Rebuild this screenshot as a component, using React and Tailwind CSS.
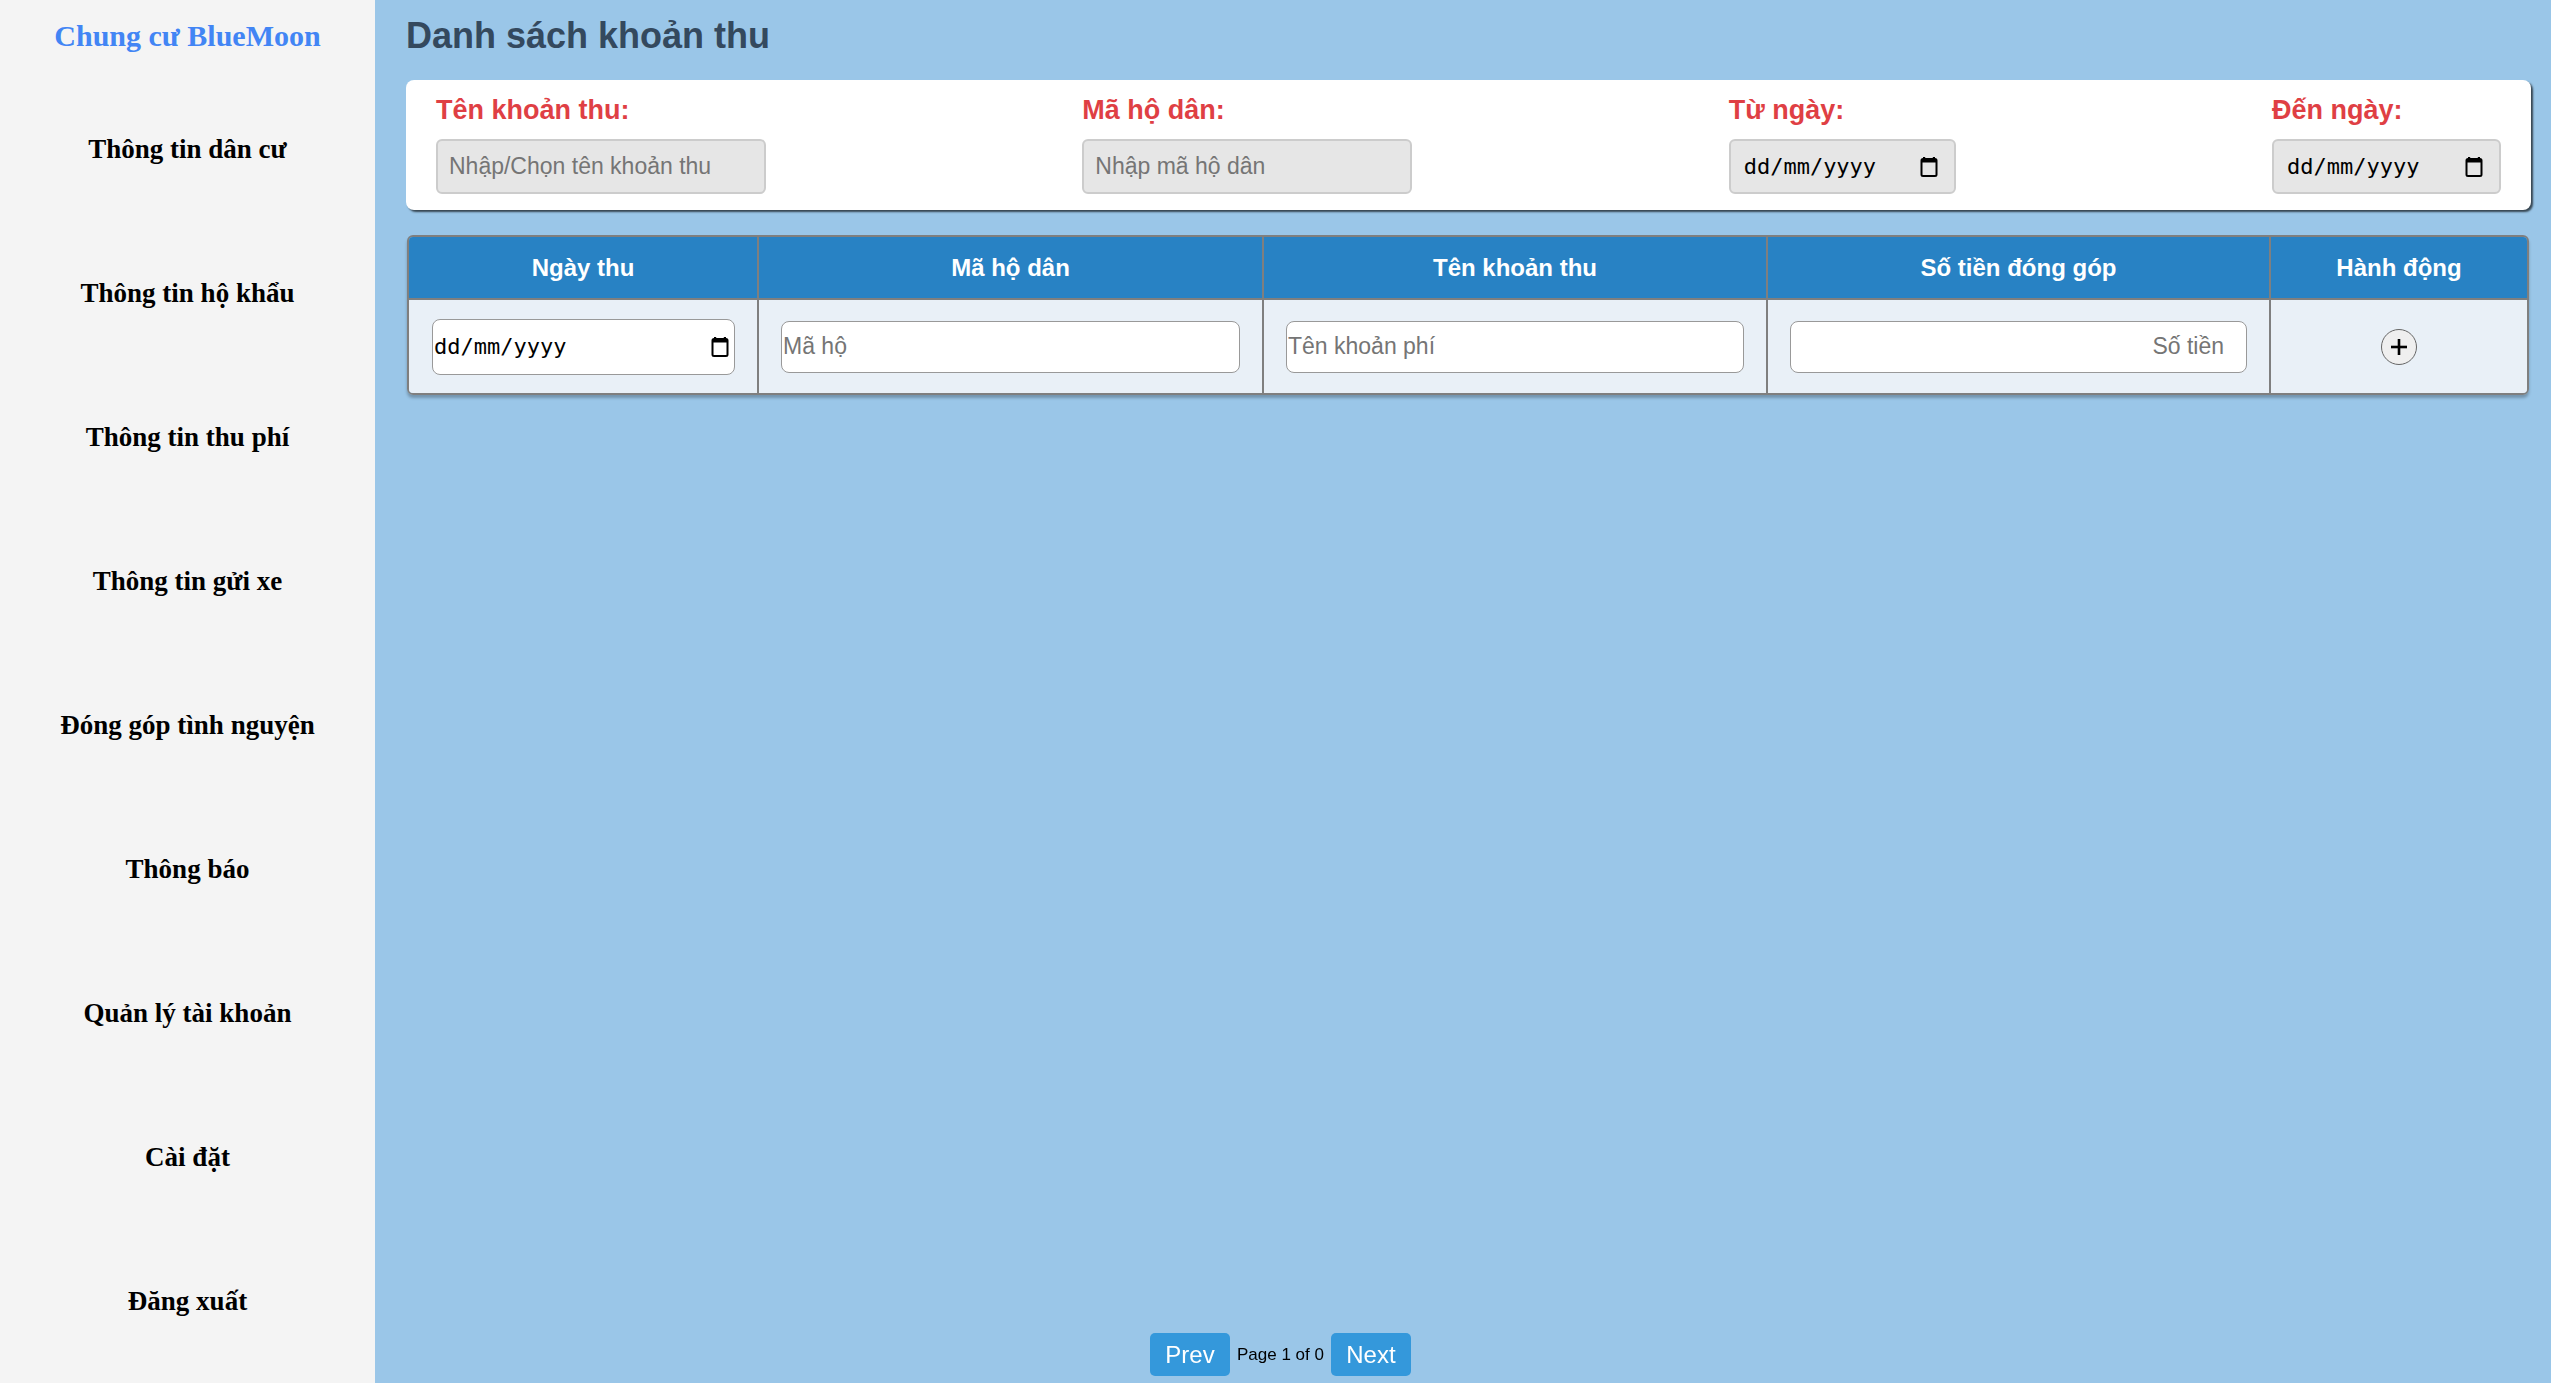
import React from 'react';

const navItems = [
  'Thông tin dân cư',
  'Thông tin hộ khẩu',
  'Thông tin thu phí',
  'Thông tin gửi xe',
  'Đóng góp tình nguyện',
  'Thông báo',
  'Quản lý tài khoản',
  'Cài đặt',
  'Đăng xuất',
];

const sans = { fontFamily: '"Liberation Sans", Arial, sans-serif' };

// Chrome-like calendar picker glyph
function CalendarIcon() {
  return (
    <svg width="18" height="20" viewBox="0 0 18 20" className="shrink-0">
      <rect x="3" y="0" width="2.2" height="3" fill="#000" />
      <rect x="12.8" y="0" width="2.2" height="3" fill="#000" />
      <rect x="1.5" y="2" width="15" height="17" rx="1.5" fill="none" stroke="#000" strokeWidth="2" />
      <rect x="1.5" y="2" width="15" height="3.5" fill="#000" />
    </svg>
  );
}

function FakeDate({ className }) {
  return (
    <div className={`flex items-center justify-between ${className}`}>
      <span className="text-[22px] text-black" style={{ fontFamily: '"DejaVu Sans Mono", "Liberation Mono", monospace' }}>
        dd/mm/yyyy
      </span>
      <CalendarIcon />
    </div>
  );
}

function Sidebar() {
  return (
    <aside className="w-[375px] shrink-0 bg-[#f4f4f4] h-[1383px] flex flex-col" style={{ fontFamily: '"Liberation Serif", "Times New Roman", serif' }}>
      <div className="h-[77px] pb-[5px] flex items-center justify-center">
        <span className="text-[30px] font-bold text-[#4285f4] leading-none">Chung cư BlueMoon</span>
      </div>
      {navItems.map((item) => (
        <div key={item} className="h-[144px] flex items-center justify-center">
          <span className="text-[27px] font-bold text-black leading-none">{item}</span>
        </div>
      ))}
    </aside>
  );
}

function FilterCard() {
  return (
    <div className="mt-[26px] bg-white rounded-[8px] shadow-[2px_2px_2px_rgba(0,0,0,0.65)] px-[30px] pt-[17px] pb-[16px] flex justify-between">
      {/* Tên khoản thu */}
      <div className="flex flex-col">
        <label className="text-[27px] font-bold text-[#df3f44] leading-none">Tên khoản thu:</label>
        <input
          type="text"
          placeholder="Nhập/Chọn tên khoản thu"
          className="mt-[15px] w-[330px] h-[55px] bg-[#e6e6e6] border-2 border-[#cccccc] rounded-[6px] pl-[11px] text-[23px] placeholder:text-[#757575] outline-none"
        />
      </div>
      {/* Mã hộ dân */}
      <div className="flex flex-col">
        <label className="text-[27px] font-bold text-[#df3f44] leading-none">Mã hộ dân:</label>
        <input
          type="text"
          placeholder="Nhập mã hộ dân"
          className="mt-[15px] w-[330px] h-[55px] bg-[#e6e6e6] border-2 border-[#cccccc] rounded-[6px] pl-[11px] text-[23px] placeholder:text-[#757575] outline-none"
        />
      </div>
      {/* Từ ngày */}
      <div className="flex flex-col">
        <label className="text-[27px] font-bold text-[#df3f44] leading-none">Từ ngày:</label>
        <FakeDate className="mt-[15px] w-[227px] h-[55px] bg-[#e6e6e6] border-2 border-[#cccccc] rounded-[6px] pl-[13px] pr-[16px]" />
      </div>
      {/* Đến ngày */}
      <div className="flex flex-col">
        <label className="text-[27px] font-bold text-[#df3f44] leading-none">Đến ngày:</label>
        <FakeDate className="mt-[15px] w-[229px] h-[55px] bg-[#e6e6e6] border-2 border-[#cccccc] rounded-[6px] pl-[13px] pr-[16px]" />
      </div>
    </div>
  );
}

function FeeTable() {
  const headers = ['Ngày thu', 'Mã hộ dân', 'Tên khoản thu', 'Số tiền đóng góp', 'Hành động'];
  return (
    <div className="mt-[25px] mr-[2px] ml-[1px] rounded-[6px] border-2 border-[#7f7f7f] overflow-hidden shadow-[0_3px_3px_rgba(0,0,0,0.25)]">
      <div className="grid grid-cols-[350px_505px_504px_503px_1fr] bg-[#2882c4] h-[63px] border-b-2 border-[#7f7f7f]">
        {headers.map((h, i) => (
          <div
            key={h}
            className={`flex items-center justify-center text-white text-[24px] font-bold ${i < 4 ? 'border-r-2 border-[#7f7f7f]' : ''}`}
          >
            {h}
          </div>
        ))}
      </div>
      <div className="grid grid-cols-[350px_505px_504px_503px_1fr] bg-[#e9f0f7] h-[93px]">
        <div className="flex items-center pl-[23px] pr-[22px] border-r-2 border-[#7f7f7f]">
          <FakeDate className="w-full h-[56px] bg-white border border-[#999] rounded-[8px] pl-[1px] pr-[5px]" />
        </div>
        <div className="flex items-center pl-[22px] pr-[22px] border-r-2 border-[#7f7f7f]">
          <input type="text" placeholder="Mã hộ" className="w-full h-[52px] bg-white border border-[#999] rounded-[8px] pl-[1px] text-[23px] placeholder:text-[#757575] outline-none" />
        </div>
        <div className="flex items-center pl-[22px] pr-[22px] border-r-2 border-[#7f7f7f]">
          <input type="text" placeholder="Tên khoản phí" className="w-full h-[52px] bg-white border border-[#999] rounded-[8px] pl-[1px] text-[23px] placeholder:text-[#757575] outline-none" />
        </div>
        <div className="flex items-center pl-[22px] pr-[22px] border-r-2 border-[#7f7f7f]">
          <input type="text" placeholder="Số tiền" className="w-full h-[52px] bg-white border border-[#999] rounded-[8px] pr-[22px] text-right text-[23px] placeholder:text-[#757575] outline-none" />
        </div>
        <div className="flex items-center justify-center">
          <button className="w-[36px] h-[36px] rounded-full border border-[#666] bg-[#efefef] flex items-center justify-center">
            <svg width="18" height="18" viewBox="0 0 18 18">
              <rect x="7.7" y="1" width="2.6" height="16" fill="#000" />
              <rect x="1" y="7.7" width="16" height="2.6" fill="#000" />
            </svg>
          </button>
        </div>
      </div>
    </div>
  );
}

export default function App() {
  return (
    <div className="flex w-full h-[1383px] overflow-hidden" style={sans}>
      <Sidebar />
      <main className="flex-1 bg-[#9ac6e8] pl-[31px] pr-[20px]">
        <h1 className="mt-[18px] text-[36px] font-bold text-[#34495e] leading-none">Danh sách khoản thu</h1>
        <FilterCard />
        <FeeTable />
      </main>

      {/* Pagination */}
      <div className="fixed bottom-[7px] left-[1150px] flex items-center gap-[7px]">
        <button className="w-[80px] h-[43px] bg-[#3498db] text-white text-[24px] rounded-[5px]">Prev</button>
        <span className="text-[17px] text-black">Page 1 of 0</span>
        <button className="w-[80px] h-[43px] bg-[#3498db] text-white text-[24px] rounded-[5px]">Next</button>
      </div>
    </div>
  );
}
